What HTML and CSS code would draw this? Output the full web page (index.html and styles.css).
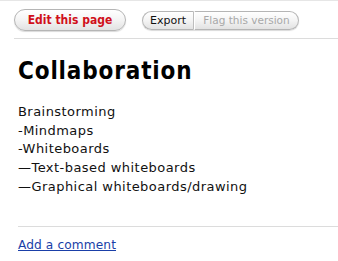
FILE: index.html
```html
<!DOCTYPE html>
<html>
<head>
<meta charset="utf-8">
<link rel="stylesheet" href="styles.css">
</head>
<body>
<div class="page">
  <div class="toolbar">
    <button class="btn edit">Edit this page</button>
    <div class="group">
      <button class="btn seg first">Export</button>
      <button class="btn seg last disabled">Flag this version</button>
    </div>
  </div>
  <div class="content">
    <h1 class="title">Collaboration</h1>
    <div class="body">
      <div>Brainstorming</div>
      <div>-Mindmaps</div>
      <div>-Whiteboards</div>
      <div>—Text-based whiteboards</div>
      <div>—Graphical whiteboards/drawing</div>
    </div>
  </div>
  <div class="footer">
    <a class="link" href="#">Add a comment</a>
  </div>
</div>
</body>
</html>
```

FILE: styles.css
```css
html, body {
  margin: 0;
  padding: 0;
  background: #ffffff;
}
.page {
  width: 338px;
  height: 261px;
  overflow: hidden;
  border-top: 1px solid #e6e6e6;
  font-family: "DejaVu Sans", Verdana, sans-serif;
  color: #000;
}
.toolbar {
  display: flex;
  align-items: center;
  gap: 16px;
  margin-left: 14px;
  padding: 8px 0 7px 0;
  border-bottom: 1px solid #dcdcdc;
}
.btn {
  font-family: "DejaVu Sans", sans-serif;
  border: 1px solid #b5b5b5;
  background: linear-gradient(#ffffff 0%, #f4f4f4 50%, #e2e2e2 100%);
  box-shadow: 0 1px 1px rgba(0,0,0,0.15);
  margin: 0;
  cursor: default;
}
.edit {
  height: 22px;
  width: 112px;
  border-radius: 11px;
  color: #d0101a;
  font-family: "DejaVu Sans Condensed", "DejaVu Sans", sans-serif;
  font-weight: bold;
  font-size: 12px;
  padding: 0;
}
.group {
  display: flex;
}
.seg {
  height: 19px;
  font-size: 11px;
  padding: 0;
  color: #111;
}
.first {
  width: 52px;
  border-radius: 10px 0 0 10px;
  border-right: 1px solid #c0c0c0;
}
.last {
  width: 105px;
  border-radius: 0 10px 10px 0;
  border-left: 1px solid #ffffff;
  font-size: 10.5px;
}
.disabled {
  color: #a8a8a8;
}
.content {
  height: 187px;
  border-bottom: 1px solid #dcdcdc;
  margin-left: 18px;
}
.title {
  margin: 0;
  padding-top: 16px;
  font-family: "DejaVu Sans Condensed", "DejaVu Sans", sans-serif;
  font-size: 24px;
  letter-spacing: 0.85px;
  font-weight: bold;
  line-height: 32px;
  color: #000;
}
.body {
  margin-top: 16px;
  font-size: 13px;
  letter-spacing: 0.45px;
  line-height: 18.7px;
  color: #111;
}
.footer {
  margin-left: 18px;
  padding-top: 11px;
  font-size: 12.2px;
  letter-spacing: 0.1px;
}
.link {
  color: #1a3fa8;
  text-decoration: underline;
}
```
